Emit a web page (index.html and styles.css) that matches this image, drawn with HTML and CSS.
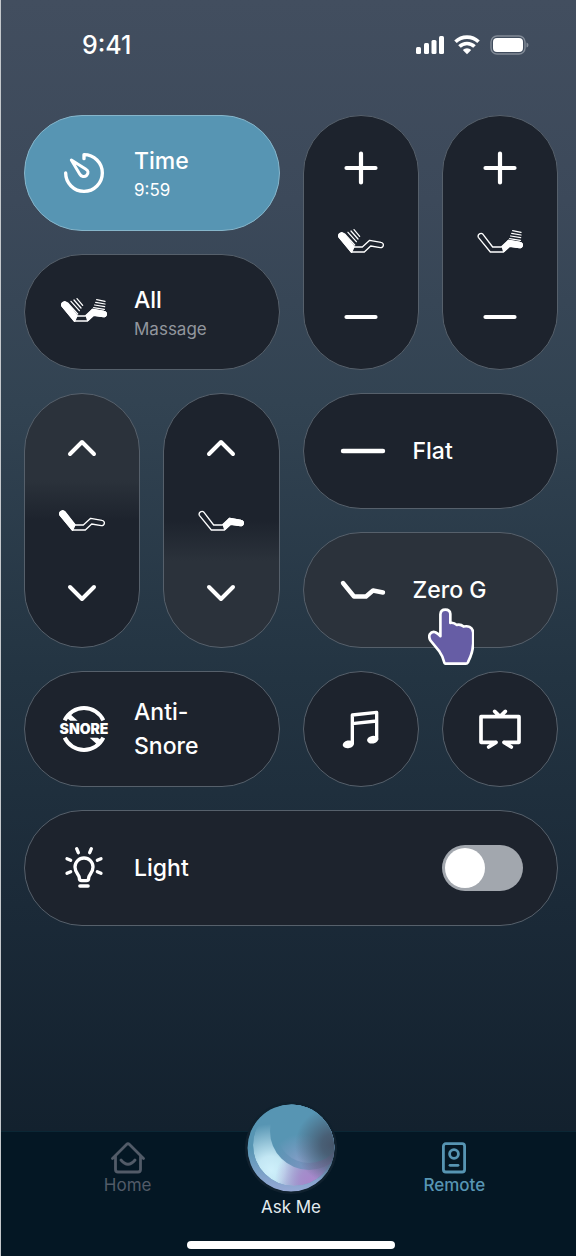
FILE: index.html
```html
<!DOCTYPE html>
<html lang="en">
<head>
<meta charset="utf-8">
<meta name="viewport" content="width=device-width, initial-scale=1">
<title>Bed Remote</title>
<link rel="stylesheet" href="styles.css">
</head>
<body>
<svg class="defs" width="0" height="0" aria-hidden="true">
  <symbol id="bed" viewBox="0 9 138 84">
    <path d="M18 25 47 63H73L95 43 129 49A8 8 0 0 1 127 65L98 60 79 78H40L4 34A8.500 8.500 0 0 1 18 25Z" fill="none" stroke="#fff" stroke-width="4" stroke-linejoin="round"/>
  </symbol>
  <symbol id="back" viewBox="0 9 138 84"><path d="M18 24 48 62 41 79 4 35A8.500 8.500 0 0 1 18 24Z" fill="#fff" stroke="#fff" stroke-width="4" stroke-linejoin="round"/></symbol>
  <symbol id="legs" viewBox="0 9 138 84"><path d="M76 63 95 43 129 49A8 8 0 0 1 127 65L98 61 80 77Z" fill="#fff" stroke="#fff" stroke-width="4" stroke-linejoin="round"/></symbol>
  <symbol id="back-waves" viewBox="0 2 138 84"><path d="M23 11 53 44M33 6 58 34M42 2 63 26M51 -2 68 18" transform="translate(-3 6)" stroke="#fff" stroke-width="3.800" stroke-linecap="round"/></symbol>
  <symbol id="leg-waves" viewBox="0 9 138 84"><path d="M107 14 132 19M104 22 132 27M101 30 131 35M98 38 130 43" stroke="#fff" stroke-width="3.800" stroke-linecap="round"/></symbol>
  <symbol id="plus" viewBox="0 0 34 34"><path d="M2.500 17H31.500M17 2.500V31.500" stroke="#fff" stroke-width="4.200" stroke-linecap="round"/></symbol>
  <symbol id="minus" viewBox="0 0 34 34"><path d="M2.500 17H31.500" stroke="#fff" stroke-width="4.200" stroke-linecap="round"/></symbol>
  <symbol id="up" viewBox="0 0 34 34"><path d="M5 23 17 11 29 23" fill="none" stroke="#fff" stroke-width="4" stroke-linecap="round" stroke-linejoin="round"/></symbol>
  <symbol id="down" viewBox="0 0 34 34"><path d="M5 11 17 23 29 11" fill="none" stroke="#fff" stroke-width="4" stroke-linecap="round" stroke-linejoin="round"/></symbol>
</svg>

<div class="screen">
  <header class="status">
    <time class="clock">9:41</time>
    <div class="signals">
      <svg width="28" height="20" viewBox="0 0 28 20" fill="#fff" aria-hidden="true"><rect x="0" y="12" width="5" height="7" rx="1.500"/><rect x="8" y="8" width="5" height="11" rx="1.500"/><rect x="15.500" y="5" width="5" height="14" rx="1.500"/><rect x="23" y="1" width="5" height="18" rx="1.500"/></svg>
      <svg width="26" height="20" viewBox="0 0 26 20" aria-hidden="true"><g fill="none" stroke="#fff" stroke-width="3.600"><path d="M1.500 6.800A16.500 16.500 0 0 1 24.500 6.800"/><path d="M5.500 11.600A10.500 10.500 0 0 1 20.500 11.600"/></g><path d="M8.800 15A6 6 0 0 1 17.200 15L13 19.200Z" fill="#fff"/></svg>
      <svg width="40" height="20" viewBox="0 0 40 20" aria-hidden="true"><rect x="1" y="1" width="34" height="18" rx="6" fill="none" stroke="#828b97" stroke-width="1.400"/><rect x="3" y="3" width="30" height="14" rx="4" fill="#fff"/><path d="M36.500 7.500Q38.500 8 38.500 10T36.500 12.500Z" fill="#828b97"/></svg>
    </div>
  </header>

  <main class="controls">
    <button class="card wide timer">
      <svg class="icon" viewBox="29 22 150 150" aria-hidden="true"><g fill="none" stroke="#fff" stroke-width="10" stroke-linecap="round" stroke-linejoin="round"><path d="M104 54V42A55 55 0 1 1 49 97"/><path d="M66 58 91 100C95 108 106 110 112 104 119 97 116 89 110 86Z" stroke-width="9"/></g></svg>
      <span class="label"><span class="title">Time</span><span class="sub">9:59</span></span>
    </button>

    <div class="card pill" role="group" aria-label="Back massage">
      <button class="step plus" aria-label="Increase back massage"><svg class="sign"><use href="#plus"/></svg></button>
      <svg class="bed"><use href="#bed"/><use href="#back"/><use href="#back-waves"/></svg>
      <button class="step minus" aria-label="Decrease back massage"><svg class="sign"><use href="#minus"/></svg></button>
    </div>
    <div class="card pill" role="group" aria-label="Leg massage">
      <button class="step plus" aria-label="Increase leg massage"><svg class="sign"><use href="#plus"/></svg></button>
      <svg class="bed"><use href="#bed"/><use href="#legs"/><use href="#leg-waves"/></svg>
      <button class="step minus" aria-label="Decrease leg massage"><svg class="sign"><use href="#minus"/></svg></button>
    </div>

    <button class="card wide">
      <span class="icon"><svg class="bed"><use href="#bed"/><use href="#back"/><use href="#legs"/><use href="#back-waves"/><use href="#leg-waves"/></svg></span>
      <span class="label"><span class="title">All</span><span class="sub muted">Massage</span></span>
    </button>

    <div class="card pill lit-top" role="group" aria-label="Back position">
      <button class="step raise" aria-label="Raise back"><svg class="sign"><use href="#up"/></svg></button>
      <svg class="bed"><use href="#bed"/><use href="#back"/></svg>
      <button class="step lower" aria-label="Lower back"><svg class="sign"><use href="#down"/></svg></button>
    </div>
    <div class="card pill lit-bottom" role="group" aria-label="Leg position">
      <button class="step raise" aria-label="Raise legs"><svg class="sign"><use href="#up"/></svg></button>
      <svg class="bed"><use href="#bed"/><use href="#legs"/></svg>
      <button class="step lower" aria-label="Lower legs"><svg class="sign"><use href="#down"/></svg></button>
    </div>

    <button class="card wide">
      <svg class="icon" viewBox="0 0 50 50" aria-hidden="true"><path d="M5 25H45" stroke="#fff" stroke-width="4.400" stroke-linecap="round"/></svg>
      <span class="title">Flat</span>
    </button>
    <button class="card wide pressed">
      <svg class="icon" viewBox="0 0 50 50" aria-hidden="true"><path d="M5 18 16 31.500H28L35 25.500 45 27.500" fill="none" stroke="#fff" stroke-width="4.400" stroke-linecap="round" stroke-linejoin="round"/></svg>
      <span class="title">Zero G</span>
      <svg class="hand" viewBox="0 0 138 172" aria-hidden="true"><path d="M37 85V19Q38 5 52 5T67 18V45Q78 43 86 51 98 48 107 56 118 54 125 57 135 62 136 74V107Q135 128 128 146L120 164Q118 168 114 168H52Q49 167 48 162 44 145 34 131L7 98Q1 88 5 79 11 70 22 73 30 77 37 85Z" fill="#665da5" stroke="#fff" stroke-width="8" stroke-linejoin="round"/></svg>
    </button>

    <button class="card wide">
      <svg class="icon" viewBox="119 118 150 150" aria-hidden="true">
        <g fill="none" stroke="#fff" stroke-width="12"><path d="M136 167A64 64 0 0 1 252 167"/><path d="M136 219A64 64 0 0 0 252 219"/></g>
        <path d="M148 144 175 168H153L139 157ZM211 219H235L249 229 238 243Z" fill="#fff"/>
        <text class="snore" x="194" y="208" text-anchor="middle">SNORE</text>
      </svg>
      <span class="title">Anti-<br>Snore</span>
    </button>
    <button class="card round" aria-label="Music">
      <svg width="40" height="40" viewBox="121 133 120 120" aria-hidden="true"><path d="M155 239V151L228 143V225M155 177 228 169" fill="none" stroke="#fff" stroke-width="10" stroke-linejoin="round"/><g fill="#fff"><ellipse cx="143" cy="239" rx="17" ry="11.500" transform="rotate(-12 143 239)"/><ellipse cx="216" cy="225" rx="17" ry="11.500" transform="rotate(-12 216 225)"/></g></svg>
    </button>
    <button class="card round" aria-label="TV">
      <svg width="44" height="44" viewBox="534 126 132 132" aria-hidden="true"><path d="M588 232H543V155H657V232H612M588 232 566 246M612 232 634 246M584 139 600 155 616 139" fill="none" stroke="#fff" stroke-width="11" stroke-linecap="round" stroke-linejoin="round"/></svg>
    </button>

    <div class="card full">
      <svg class="icon" viewBox="29 26 150 150" aria-hidden="true"><g fill="none" stroke="#fff" stroke-width="10" stroke-linecap="round" stroke-linejoin="round"><path d="M90 131C90 120 77 116 77 98A27 27 0 0 1 131 98C131 116 118 120 118 131Q118 139 111 139H97Q90 139 90 131Z"/><path d="M92 155H116" stroke-width="11"/><path d="M82 43 87 55M126 43 121 55M53 73 64 78M155 73 144 78M53 117 64 112M155 117 144 112"/></g></svg>
      <label class="title grow" for="light">Light</label>
      <input class="toggle" type="checkbox" role="switch" id="light">
    </div>
  </main>

  <footer class="dock">
    <nav class="tabs">
      <a class="tab dim" href="#home">
        <svg width="34" height="32" viewBox="0 0 34 32" fill="none" stroke="currentColor" stroke-width="2.800" stroke-linecap="round" stroke-linejoin="round" aria-hidden="true"><path d="M1.500 16.500 15.500 2.500Q17 1 18.500 2.500L32.500 16.500M4.500 14V27.500Q4.500 30 7 30H27Q29.500 30 29.500 27.500V14M10 18Q17 26.500 24 18"/></svg>
        Home
      </a>
      <a class="tab ask" href="#ask">
        <svg class="orb" viewBox="-48 -48 96 96" aria-hidden="true">
          <defs>
            <clipPath id="disc"><circle r="43.500"/></clipPath>
            <clipPath id="inner"><circle cx="3" cy="-3" r="41"/></clipPath>
            <radialGradient id="pale" gradientUnits="userSpaceOnUse" cx="-20" cy="22" r="46"><stop offset="0" stop-color="#cff0fb"/><stop offset=".3" stop-color="#cff0fb" stop-opacity=".9"/><stop offset="1" stop-color="#cff0fb" stop-opacity="0"/></radialGradient>
            <radialGradient id="violet" gradientUnits="userSpaceOnUse" cx="20" cy="32" r="36"><stop offset="0" stop-color="#a987cb"/><stop offset=".3" stop-color="#a987cb" stop-opacity=".85"/><stop offset="1" stop-color="#a987cb" stop-opacity="0"/></radialGradient>
            <radialGradient id="dusk" gradientUnits="userSpaceOnUse" cx="42" cy="-3" r="38"><stop offset="0" stop-color="#46566b"/><stop offset=".3" stop-color="#46566b" stop-opacity=".85"/><stop offset="1" stop-color="#46566b" stop-opacity="0"/></radialGradient>
            <linearGradient id="rim" x1="0" y1="0" x2="0" y2="1"><stop offset=".5" stop-color="#5795b3"/><stop offset="1" stop-color="#97a9d6"/></linearGradient>
            <linearGradient id="band" gradientUnits="userSpaceOnUse" x1="-16" y1="-12" x2="34" y2="28"><stop offset=".1" stop-color="#5795b3"/><stop offset=".6" stop-color="#7594be"/><stop offset="1" stop-color="#8f78b0"/></linearGradient>
            <radialGradient id="core" gradientUnits="userSpaceOnUse" cx="10" cy="18" r="32"><stop offset="0" stop-color="#8a9fca"/><stop offset="1" stop-color="#5795b3"/></radialGradient>
          </defs>
          <circle r="46" fill="#10212e"/>
          <g clip-path="url(#disc)">
            <circle r="44" fill="url(#rim)"/>
            <g clip-path="url(#inner)">
              <circle cx="3" cy="-3" r="41" fill="#5795b3"/>
              <circle cx="3" cy="-3" r="41" fill="url(#pale)"/>
              <circle cx="3" cy="-3" r="41" fill="url(#violet)"/>
              <circle cx="18" cy="-17" r="39" fill="url(#band)"/>
              <circle cx="18" cy="-17" r="32" fill="url(#core)"/>
            </g>
            <circle r="44" fill="url(#dusk)"/>
          </g>
        </svg>
        Ask Me
      </a>
      <a class="tab active" href="#remote" aria-current="page">
        <svg width="34" height="32" viewBox="0 0 34 32" fill="none" stroke="currentColor" stroke-width="2.800" stroke-linecap="round" aria-hidden="true"><rect x="6.400" y="1.700" width="21.200" height="28.300" rx="2.500"/><circle cx="17" cy="12" r="4.400"/><path d="M13 23.300H21"/></svg>
        Remote
      </a>
    </nav>
    <div class="home-bar"></div>
  </footer>
</div>
</body>
</html>
```

FILE: styles.css
```css
* {
  box-sizing: border-box;
}

body {
  margin: 0;
  font-family: Inter, "Liberation Sans", sans-serif;
  color: #fff;
}

button {
  font: inherit;
  color: inherit;
  cursor: pointer;
}

svg {
  display: block;
}

.defs {
  position: absolute;
}

.screen {
  display: flex;
  flex-direction: column;
  min-height: 100vh;
  border-left: 1px solid #c4c8cc;
  background: linear-gradient(#424e5f 0%, #3c495a 16%, #324352 32%, #233442 54%, #1b2a38 72%, #12202d 92%);
}

.status {
  display: flex;
  justify-content: space-between;
  align-items: center;
  padding: 30px 46px 55px 81px;
}

.clock {
  font-size: 25px;
  line-height: 30px;
  font-weight: 500;
}

.signals {
  display: flex;
  gap: 10px;
}

.controls {
  display: grid;
  grid-template-columns: repeat(4, 1fr);
  grid-auto-rows: 116px;
  gap: 23px;
  padding: 0 18px 0 23px;
}

.card {
  display: flex;
  align-items: center;
  padding: 0;
  border: 1px solid #56606b;
  border-radius: 58px;
  background: #1d232d;
}

.wide,
.full {
  position: relative;
  grid-column: span 2;
  gap: 25px;
  padding: 0 34px;
  text-align: left;
}

.full {
  grid-column: 1 / -1;
}

.pill {
  grid-row: span 2;
  flex-direction: column;
}

.round {
  justify-content: center;
}

.timer {
  background: #5795b3;
  border-color: #86b5ca;
}

.pressed {
  background: #2b323b;
}

.lit-top {
  background: linear-gradient(#2b323b 34%, #1d232d 50%);
}

.lit-bottom {
  background: linear-gradient(#1d232d 50%, #2b323b 66%);
}

.step {
  flex: 1;
  display: flex;
  align-items: center;
  justify-content: center;
  width: 100%;
  padding: 0;
  border: 0;
  background: none;
}

.plus {
  padding-bottom: 8px;
}

.minus {
  padding-top: 8px;
}

.raise {
  padding-bottom: 4px;
}

.lower {
  padding-top: 4px;
}

.sign {
  width: 34px;
  height: 34px;
}

.bed {
  width: 46px;
  height: 28px;
}

.icon {
  display: flex;
  align-items: center;
  justify-content: center;
  flex: none;
  width: 50px;
  height: 50px;
}

.snore {
  fill: #fff;
  font-size: 42px;
  font-weight: 900;
}

.label {
  display: flex;
  flex-direction: column;
}

.title {
  font-size: 23px;
  line-height: 34px;
  font-weight: 500;
}

.sub {
  font-size: 17px;
  line-height: 24px;
}

.muted {
  color: #92969d;
}

.grow {
  flex: 1;
}

.hand {
  position: absolute;
  left: 124px;
  top: 75px;
  width: 46px;
  height: 57px;
}

.toggle {
  appearance: none;
  display: flex;
  align-items: center;
  width: 81px;
  height: 46px;
  margin: 0;
  padding: 3px;
  border-radius: 23px;
  background: #a2a7ae;
  cursor: pointer;
}

.toggle::before {
  content: "";
  width: 40px;
  height: 40px;
  border-radius: 50%;
  background: #fff;
}

.toggle:checked {
  justify-content: flex-end;
  background: #5795b3;
}

.dock {
  margin-top: auto;
  padding: 0 40px 7px 45px;
  border-top: 1px solid #0b2735;
  background: #041724;
}

.tabs {
  display: grid;
  grid-template-columns: repeat(3, 1fr);
  align-items: start;
}

.tab {
  display: flex;
  flex-direction: column;
  align-items: center;
  padding-top: 10px;
  font-size: 17px;
  line-height: 22px;
  text-decoration: none;
}

.dim {
  color: #525b68;
}

.active {
  color: #5795b3;
  font-weight: 500;
}

.ask {
  margin-top: -32px;
  padding-top: 0;
  color: #e3ebf0;
}

.orb {
  width: 96px;
  height: 96px;
}

.home-bar {
  width: 208px;
  height: 8px;
  margin: 23px auto 0;
  border-radius: 4px;
  background: #fff;
}
```
